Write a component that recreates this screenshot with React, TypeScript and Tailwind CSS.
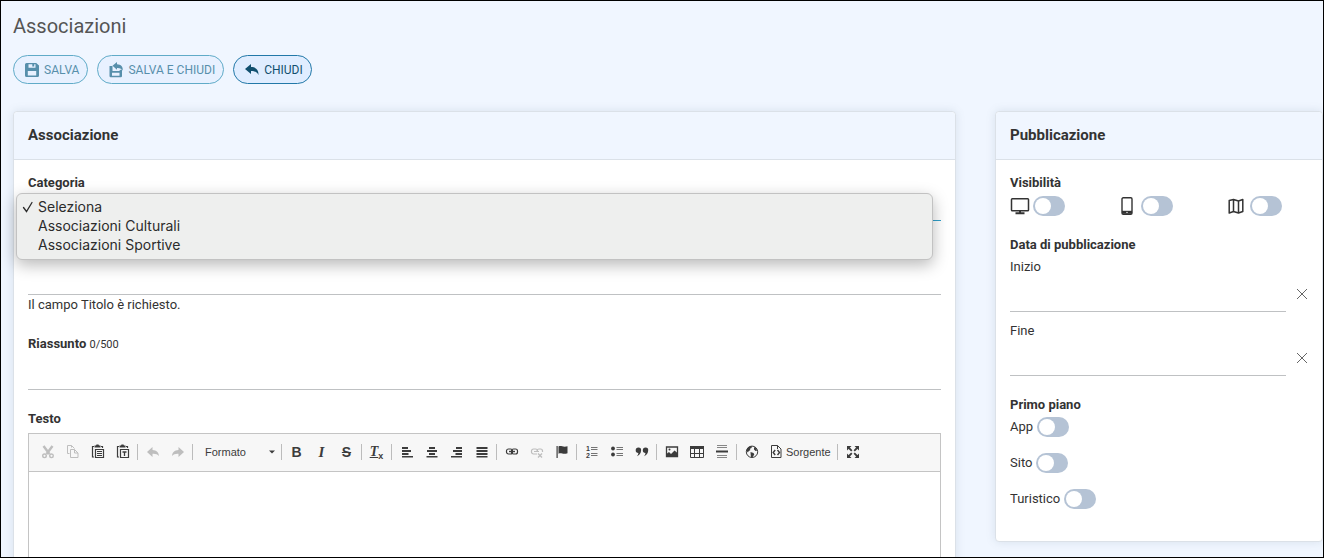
import { useState } from 'react';
import type { ReactNode } from 'react';

const categories = ['Seleziona', 'Associazioni Culturali', 'Associazioni Sportive'];

const icons: Record<string, ReactNode> = {
  cut: (
    <>
      <path d="M3.500 2l6 8M12.500 2l-6 8" stroke="currentColor" strokeWidth="2.400" fill="none" />
      <circle cx="4.500" cy="11.800" r="1.800" stroke="currentColor" strokeWidth="1.400" fill="none" />
      <circle cx="11.500" cy="11.800" r="1.800" stroke="currentColor" strokeWidth="1.400" fill="none" />
    </>
  ),
  copy: (
    <path
      d="M4.500 9.500h-2v-8h4l3 3M6.500 1.500v2M5.500 5.500h4l3.500 3.500v4.500H5.500zM9.500 5.500V9H13"
      stroke="currentColor"
      fill="none"
    />
  ),
  paste: (
    <>
      <path d="M4 2.500H2.500v10.500H4M11 2.500h1.500V4" stroke="currentColor" strokeWidth="1.200" fill="none" />
      <path d="M4.500 1.500h1.500l.5-1h2l.5 1h1.500v2h-6z" />
      <path d="M5.500 5.500h8v8h-8z" stroke="currentColor" strokeWidth="1.200" fill="none" />
      <path d="M7 7.500h5M7 9.500h5M7 11.500h5" stroke="currentColor" strokeWidth="1.200" />
    </>
  ),
  pasteText: (
    <>
      <path d="M4 2.500H2.500v10.500H4M11 2.500h1.500V4" stroke="currentColor" strokeWidth="1.200" fill="none" />
      <path d="M4.500 1.500h1.500l.5-1h2l.5 1h1.500v2h-6z" />
      <path d="M5.500 5.500h8v8h-8z" stroke="currentColor" strokeWidth="1.200" fill="none" />
      <path d="M7.500 8h4M9.500 8v4" stroke="currentColor" strokeWidth="1.300" />
    </>
  ),
  undo: <path d="M2 8l5.500-5v3c4 .2 6.200 2.300 6.500 6-1.500-1.800-3.500-2.500-6.500-2.300V13z" />,
  redo: <path d="M14 8L8.500 3v3C4.500 6.200 2.300 8.300 2 12c1.500-1.800 3.500-2.500 6.500-2.300V13z" />,
  left: <path d="M3 3h6v2H3zM3 6h9v2H3zM3 9h6.500v2H3zM3 12h11v1.500H3z" />,
  center: <path d="M5 3h6v2H5zM3 6h10v2H3zM5 9h6v2H5zM2.500 12h11v1.500h-11z" />,
  right: <path d="M7 3h6v2H7zM4 6h9v2H4zM6.500 9H13v2H6.500zM2 12h11v1.500H2z" />,
  justify: <path d="M2.500 3h11v2h-11zM2.500 6h11v2h-11zM2.500 9h11v2h-11zM2.500 12h11v1.500h-11z" />,
  link: (
    <>
      <rect x="2.500" y="5" width="6" height="5" rx="2" stroke="currentColor" strokeWidth="1.200" fill="none" />
      <rect x="7.500" y="5" width="6" height="5" rx="2" stroke="currentColor" strokeWidth="1.200" fill="none" />
      <path d="M5 7.500h6" stroke="currentColor" strokeWidth="1.400" />
    </>
  ),
  unlink: (
    <>
      <path
        d="M8 10H4.500a2 2 0 01-2-2V7a2 2 0 012-2h2a2 2 0 012 2M8 8V7a2 2 0 012-2h1.500a2 2 0 012 2v1M5 7.500h5"
        stroke="currentColor"
        strokeWidth="1.200"
        fill="none"
      />
      <path d="M9 9.500l4 4M13 9.500l-4 4" stroke="currentColor" strokeWidth="1.300" />
    </>
  ),
  flag: <path d="M2.500 2h1.200v12H2.500zM4.500 2.500C7 1 8.500 3.500 13.500 2.300v7C9 10.800 7 8.300 4.500 9.800z" />,
  numbered: (
    <>
      <text x="2" y="7" fontSize="7" fontWeight="700">1</text>
      <text x="2" y="14" fontSize="7" fontWeight="700">2</text>
      <path d="M7 3.500h6.500M7 5.500h6.500M7 9.500h6.500M7 11.500h6.500" stroke="currentColor" strokeOpacity=".7" />
    </>
  ),
  bulleted: (
    <>
      <circle cx="4" cy="4.500" r="1.900" />
      <circle cx="4" cy="10.500" r="1.900" />
      <path d="M7.500 3.500H14M7.500 5.500H14M7.500 9.500H14M7.500 11.500H14" stroke="currentColor" strokeOpacity=".7" />
    </>
  ),
  quote: (
    <path d="M4.500 3.500a2.600 2.600 0 012.600 2.800c0 3-1.700 4.900-4.200 6 .9-1.200 1.400-2.100 1.500-3.300a2.700 2.700 0 01.1-5.500zM11.600 3.500a2.600 2.600 0 012.600 2.800c0 3-1.700 4.900-4.200 6 .9-1.200 1.400-2.100 1.500-3.300a2.700 2.700 0 01.1-5.500z" />
  ),
  image: (
    <>
      <path d="M2.500 3h11v9.500h-11z" stroke="currentColor" strokeWidth="1.300" fill="none" />
      <path d="M3 12V9.500l2-1.500 2 2 3.500-3.500 3 2.500v3z" />
      <circle cx="5.500" cy="5.500" r="1" />
    </>
  ),
  table: (
    <>
      <path d="M1 2h14v3H1z" />
      <path d="M1.500 2.500h13v11h-13zM1.500 9.500h13M5.500 4v9.500M10.500 4v9.500" stroke="currentColor" fill="none" />
    </>
  ),
  rule: (
    <>
      <path d="M3 1.500h10M3 3.500h10M3 11.500h10M3 13.500h10" stroke="currentColor" strokeOpacity=".6" />
      <path d="M2 6.500h12v2H2z" />
    </>
  ),
  globe: (
    <>
      <circle cx="8" cy="7.800" r="5.700" stroke="currentColor" fill="none" />
      <path d="M3 4.500C4.500 2.500 6.500 2 8 2.300l-.5 1.700-1.500.8.300 1.500-1.600.7-.7 1.500L2.600 7zM10 3l2 1.200 1.300 2.300-1.800.5L10 5.500zM6.500 8l3 1 .8 1.500-2 3-1.300-.5-.3-2.300z" />
    </>
  ),
  source: (
    <>
      <path d="M3.500 1.500h6l3.500 3.500v8.500H3.500zM9.500 1.500V5" stroke="currentColor" fill="none" />
      <path d="M7.200 6L5.200 8.500l2 2.500M9.500 6l2 2.500-2 2.500" stroke="currentColor" strokeWidth="1.400" fill="none" />
    </>
  ),
  maximize: (
    <>
      <path d="M2 2h4.500L2 6.500zM14 2v4.500L9.500 2zM2 14V9.500L6.500 14zM14 14H9.500L14 9.500z" />
      <path d="M3 3l3.800 3.800M13 3L9.200 6.800M3 13l3.800-3.800M13 13L9.200 9.200" stroke="currentColor" strokeWidth="1.800" />
    </>
  ),
};

const ToolIcon = ({ name }: { name: string }) => (
  <svg viewBox="0 0 16 16" className="size-4 shrink-0" fill="currentColor" aria-hidden="true">
    {icons[name]}
  </svg>
);

const Tool = ({ label, icon, disabled, children }: { label: string; icon?: string; disabled?: boolean; children?: ReactNode }) => (
  <button
    type="button"
    aria-label={label}
    disabled={disabled}
    className="flex h-7 w-[25px] items-center justify-center disabled:opacity-30"
  >
    {icon ? <ToolIcon name={icon} /> : children}
  </button>
);

const Separator = () => <span className="mx-0.5 h-4 w-px bg-[#bcbcbc]" />;

const Switch = ({ id, label }: { id: string; label?: string }) => (
  <input
    id={id}
    type="checkbox"
    role="switch"
    aria-label={label}
    className="flex h-5 w-8 shrink-0 appearance-none items-center rounded-full bg-[#b5c3d5] px-0.5 before:size-4 before:rounded-full before:bg-white checked:bg-[#17629f] checked:before:translate-x-3"
  />
);

const SaveIcon = ({ back }: { back?: boolean }) => (
  <svg viewBox="0 0 16 16" className="size-4" aria-hidden="true" fill="currentColor" fillRule="evenodd">
    {back ? (
      <>
        <path d="M1.500 4h3v5h6.500l2-1.500h1V14a1.200 1.200 0 01-1.200 1.200H2.700A1.200 1.200 0 011.500 14zM4 10.700v3h7.500v-3z" />
        <path d="M4.500 3.800L9 0v2.200c4 .2 6.200 2.500 5.700 6.500-.9-1.900-2.600-2.800-5.700-2.700v1.800z" />
      </>
    ) : (
      <path d="M2.500 1h9.700L15 3.500v10a1.500 1.500 0 01-1.500 1.500h-11A1.500 1.500 0 011 13.500v-11A1.500 1.500 0 012.500 1zM4.500 2.200v3.600h7V2.200h-1.300v2.400H8.300V2.200zM3.800 9v4.500h8.400V9z" />
    )}
  </svg>
);

const VisibilityIcon = ({ name }: { name: string }) => {
  if (name === 'desktop') {
    return (
      <svg viewBox="0 0 20 18" className="h-[18px] w-5" aria-hidden="true" fill="none" stroke="currentColor">
        <rect x="1.500" y="1.700" width="17" height="12" rx=".8" strokeWidth="1.500" />
        <path d="M10 13.500v2.500M5.500 16.300h9" strokeWidth="2" />
      </svg>
    );
  }
  if (name === 'mobile') {
    return (
      <svg viewBox="0 0 12 18" className="h-[18px] w-3" aria-hidden="true">
        <rect x="1" y=".8" width="10" height="16.400" rx="1.200" fill="none" stroke="currentColor" strokeWidth="1.400" />
        <path d="M1 13.800h10v3H1z" fill="currentColor" />
        <circle cx="6" cy="15.400" r=".7" fill="white" />
      </svg>
    );
  }
  return (
    <svg viewBox="0 0 16 16" className="size-4" aria-hidden="true" fill="none" stroke="currentColor" strokeWidth="1.500">
      <path d="M1.200 2.500L5.500 1.500l5 1.500 4.300-1.500v12l-4.300 1.500-5-1.500-4.300 1.500zM5.500 1.500v12M10.500 3v12" strokeLinejoin="round" />
    </svg>
  );
};

const DateField = ({ id, label }: { id: string; label: string }) => (
  <div>
    <label htmlFor={id} className="block leading-5">{label}</label>
    <div className="flex items-center">
      <input id={id} type="text" className="h-[35px] min-w-0 flex-1 border-b border-[#bfc1c3] bg-transparent outline-none" />
      <button type="button" aria-label={`Cancella ${label}`} className="pt-1 pb-1.5 pl-2.5">
        <svg viewBox="0 0 12 12" className="size-3" aria-hidden="true">
          <path d="M1 1l10 10M11 1L1 11" stroke="#666" fill="none" />
        </svg>
      </button>
    </div>
  </div>
);

const Card = ({ title, children }: { title: string; children: ReactNode }) => (
  <section className="rounded border border-[#dbe1e8] bg-white shadow-[0_0_10px_rgba(90,110,130,0.15)]">
    <h2 className="rounded-t border-b border-[#dbe1e8] bg-[#f0f6ff] px-3.5 py-3 text-[15px] leading-[23px] font-bold">{title}</h2>
    <div className="px-3.5 pt-[13px] pb-8">{children}</div>
  </section>
);

const Editor = () => (
  <div className="border border-[#c4c4c4]">
    <div className="flex flex-wrap items-center border-b border-[#c4c4c4] bg-[#f7f7f7] px-1.5 pt-1 pb-[5px] font-['Liberation_Sans',sans-serif] text-[#3c3c3c]">
      <Tool label="Taglia" icon="cut" disabled />
      <Tool label="Copia" icon="copy" disabled />
      <Tool label="Incolla" icon="paste" />
      <Tool label="Incolla come testo" icon="pasteText" />
      <Separator />
      <Tool label="Annulla" icon="undo" disabled />
      <Tool label="Ripristina" icon="redo" disabled />
      <Separator />
      <button type="button" className="flex h-7 w-[84px] items-center justify-between pr-1 pl-2.5 text-[11px]">
        Formato
        <svg viewBox="0 0 6 4" className="h-1 w-1.5" fill="currentColor" aria-hidden="true">
          <path d="M0 .5h6l-3 3z" />
        </svg>
      </button>
      <Separator />
      <Tool label="Grassetto"><b className="text-[14px] leading-4">B</b></Tool>
      <Tool label="Corsivo"><i className="font-['Liberation_Serif',serif] text-[15px] leading-4 font-bold">I</i></Tool>
      <Tool label="Barrato"><s className="text-[14px] leading-4 font-bold">S</s></Tool>
      <Separator />
      <Tool label="Rimuovi formattazione">
        <span className="flex items-end font-bold">
          <i className="font-['Liberation_Serif',serif] text-[14px] leading-4 underline">T</i>
          <span className="text-[9px] leading-2">x</span>
        </span>
      </Tool>
      <Separator />
      <Tool label="Allinea a sinistra" icon="left" />
      <Tool label="Centrato" icon="center" />
      <Tool label="Allinea a destra" icon="right" />
      <Tool label="Giustifica" icon="justify" />
      <Separator />
      <Tool label="Collegamento" icon="link" />
      <Tool label="Elimina collegamento" icon="unlink" disabled />
      <Tool label="Ancora" icon="flag" />
      <Separator />
      <Tool label="Elenco numerato" icon="numbered" />
      <Tool label="Elenco puntato" icon="bulleted" />
      <Tool label="Citazione" icon="quote" />
      <Separator />
      <Tool label="Immagine" icon="image" />
      <Tool label="Tabella" icon="table" />
      <Tool label="Riga orizzontale" icon="rule" />
      <Separator />
      <Tool label="IFrame" icon="globe" />
      <button type="button" className="flex h-7 w-[71px] items-center gap-0.5 pl-1 text-[11px]">
        <ToolIcon name="source" />
        Sorgente
      </button>
      <Separator />
      <Tool label="Massimizza" icon="maximize" />
    </div>
    <textarea id="testo" className="block h-52 w-full resize-none bg-white p-5 outline-none" />
  </div>
);

const pill = 'flex h-[29px] items-center gap-1 rounded-full border pr-2 pl-2.5 text-[12px]';

export default function App() {
  const [category, setCategory] = useState(categories[0]);
  const [open, setOpen] = useState(true);
  const [summary, setSummary] = useState('');

  const choose = (name: string) => {
    setCategory(name);
    setOpen(false);
  };

  return (
    <main className="h-screen overflow-hidden border border-black bg-[#f0f6ff] pt-[13px] pl-3 font-['Roboto',sans-serif] text-[13px] text-[#333]">
      <h1 className="text-xl leading-6 text-[#555]">Associazioni</h1>

      <div className="mt-[17px] flex gap-[9px]">
        <button type="button" disabled className={`${pill} border-[#60abc8] bg-[#e8f1ff] text-[#578fab]`}>
          <SaveIcon />
          SALVA
        </button>
        <button type="button" disabled className={`${pill} border-[#60abc8] bg-[#e8f1ff] text-[#578fab]`}>
          <SaveIcon back />
          SALVA E CHIUDI
        </button>
        <button type="button" className={`${pill} border-[#2278a8] bg-[#e0edff] text-[#11506f]`}>
          <svg viewBox="0 0 16 16" className="size-4" fill="currentColor" aria-hidden="true">
            <path d="M1 7l6-5v3c5 0 7.700 2.500 7.500 8-1.500-2.800-3.500-4-7.500-4v3z" />
          </svg>
          CHIUDI
        </button>
      </div>

      <div className="mt-[27px] grid grid-cols-[minmax(0,1fr)_328px] items-start gap-[39px]">
        <Card title="Associazione">
          <label htmlFor="categoria" className="block leading-5 font-bold">Categoria</label>
          <div className="relative">
            <select
              id="categoria"
              value={category}
              onChange={e => setCategory(e.target.value)}
              onMouseDown={e => {
                e.preventDefault();
                setOpen(!open);
              }}
              className="block h-7 w-full appearance-none border-b border-[#2f9fc9] bg-transparent outline-none"
            >
              {categories.map(name => (
                <option key={name}>{name}</option>
              ))}
            </select>
            {open && (
              <ul
                role="listbox"
                aria-label="Categoria"
                className="absolute top-0 right-2 -left-3 z-10 rounded-md border border-[#c2c2c2] bg-[#eeefee] pt-[3px] pb-[5px] font-['Inter',sans-serif] text-[14px] text-[#2b2b2b] shadow-[0_5px_16px_rgba(0,0,0,0.28)]"
              >
                {categories.map(name => (
                  <li
                    key={name}
                    role="option"
                    aria-selected={name === category}
                    onClick={() => choose(name)}
                    className="flex items-center pl-[5px] leading-[19px]"
                  >
                    <span className="w-4">
                      {name === category && (
                        <svg viewBox="0 0 12 12" className="size-3" fill="none" stroke="currentColor" aria-hidden="true">
                          <path d="M1.500 6.500l3 4 5.500-9" strokeWidth="1.300" strokeLinecap="round" />
                        </svg>
                      )}
                    </span>
                    {name}
                  </li>
                ))}
              </ul>
            )}
          </div>

          <label htmlFor="titolo" className={`mt-[19px] block leading-5 font-bold ${open ? 'invisible' : ''}`}>Titolo</label>
          <input id="titolo" type="text" className="block h-[35px] w-full border-b border-[#bfc1c3] bg-transparent outline-none" />
          <p className="leading-5">Il campo Titolo è richiesto.</p>

          <label htmlFor="riassunto" className="mt-[19px] block leading-5 font-bold">
            Riassunto <span className="text-[11px] font-normal">{summary.length}/500</span>
          </label>
          <input
            id="riassunto"
            type="text"
            maxLength={500}
            value={summary}
            onChange={e => setSummary(e.target.value)}
            className="block h-[35px] w-full border-b border-[#bfc1c3] bg-transparent outline-none"
          />

          <label htmlFor="testo" className="mt-[19px] mb-1 block leading-5 font-bold">Testo</label>
          <Editor />
        </Card>

        <Card title="Pubblicazione">
          <h3 className="leading-5 font-bold">Visibilità</h3>
          <div className="mt-[3px] grid grid-cols-[1fr_1fr_auto] pr-[26px]">
            <div className="flex items-center gap-[3px]">
              <VisibilityIcon name="desktop" />
              <Switch id="vis-desktop" label="Desktop" />
            </div>
            <div className="flex items-center gap-2 pl-0.5">
              <VisibilityIcon name="mobile" />
              <Switch id="vis-mobile" label="Mobile" />
            </div>
            <div className="flex items-center gap-1.5">
              <VisibilityIcon name="map" />
              <Switch id="vis-map" label="Mappa" />
            </div>
          </div>

          <h3 className="mt-[19px] mb-0.5 leading-5 font-bold">Data di pubblicazione</h3>
          <div className="flex flex-col gap-[9px]">
            <DateField id="inizio" label="Inizio" />
            <DateField id="fine" label="Fine" />
          </div>

          <h3 className="mt-[19px] mb-0.5 leading-5 font-bold">Primo piano</h3>
          <div className="flex flex-col gap-4">
            {['App', 'Sito', 'Turistico'].map(name => (
              <div key={name} className="flex items-center gap-1">
                <label htmlFor={name} className="leading-5">{name}</label>
                <Switch id={name} />
              </div>
            ))}
          </div>
        </Card>
      </div>
    </main>
  );
}
